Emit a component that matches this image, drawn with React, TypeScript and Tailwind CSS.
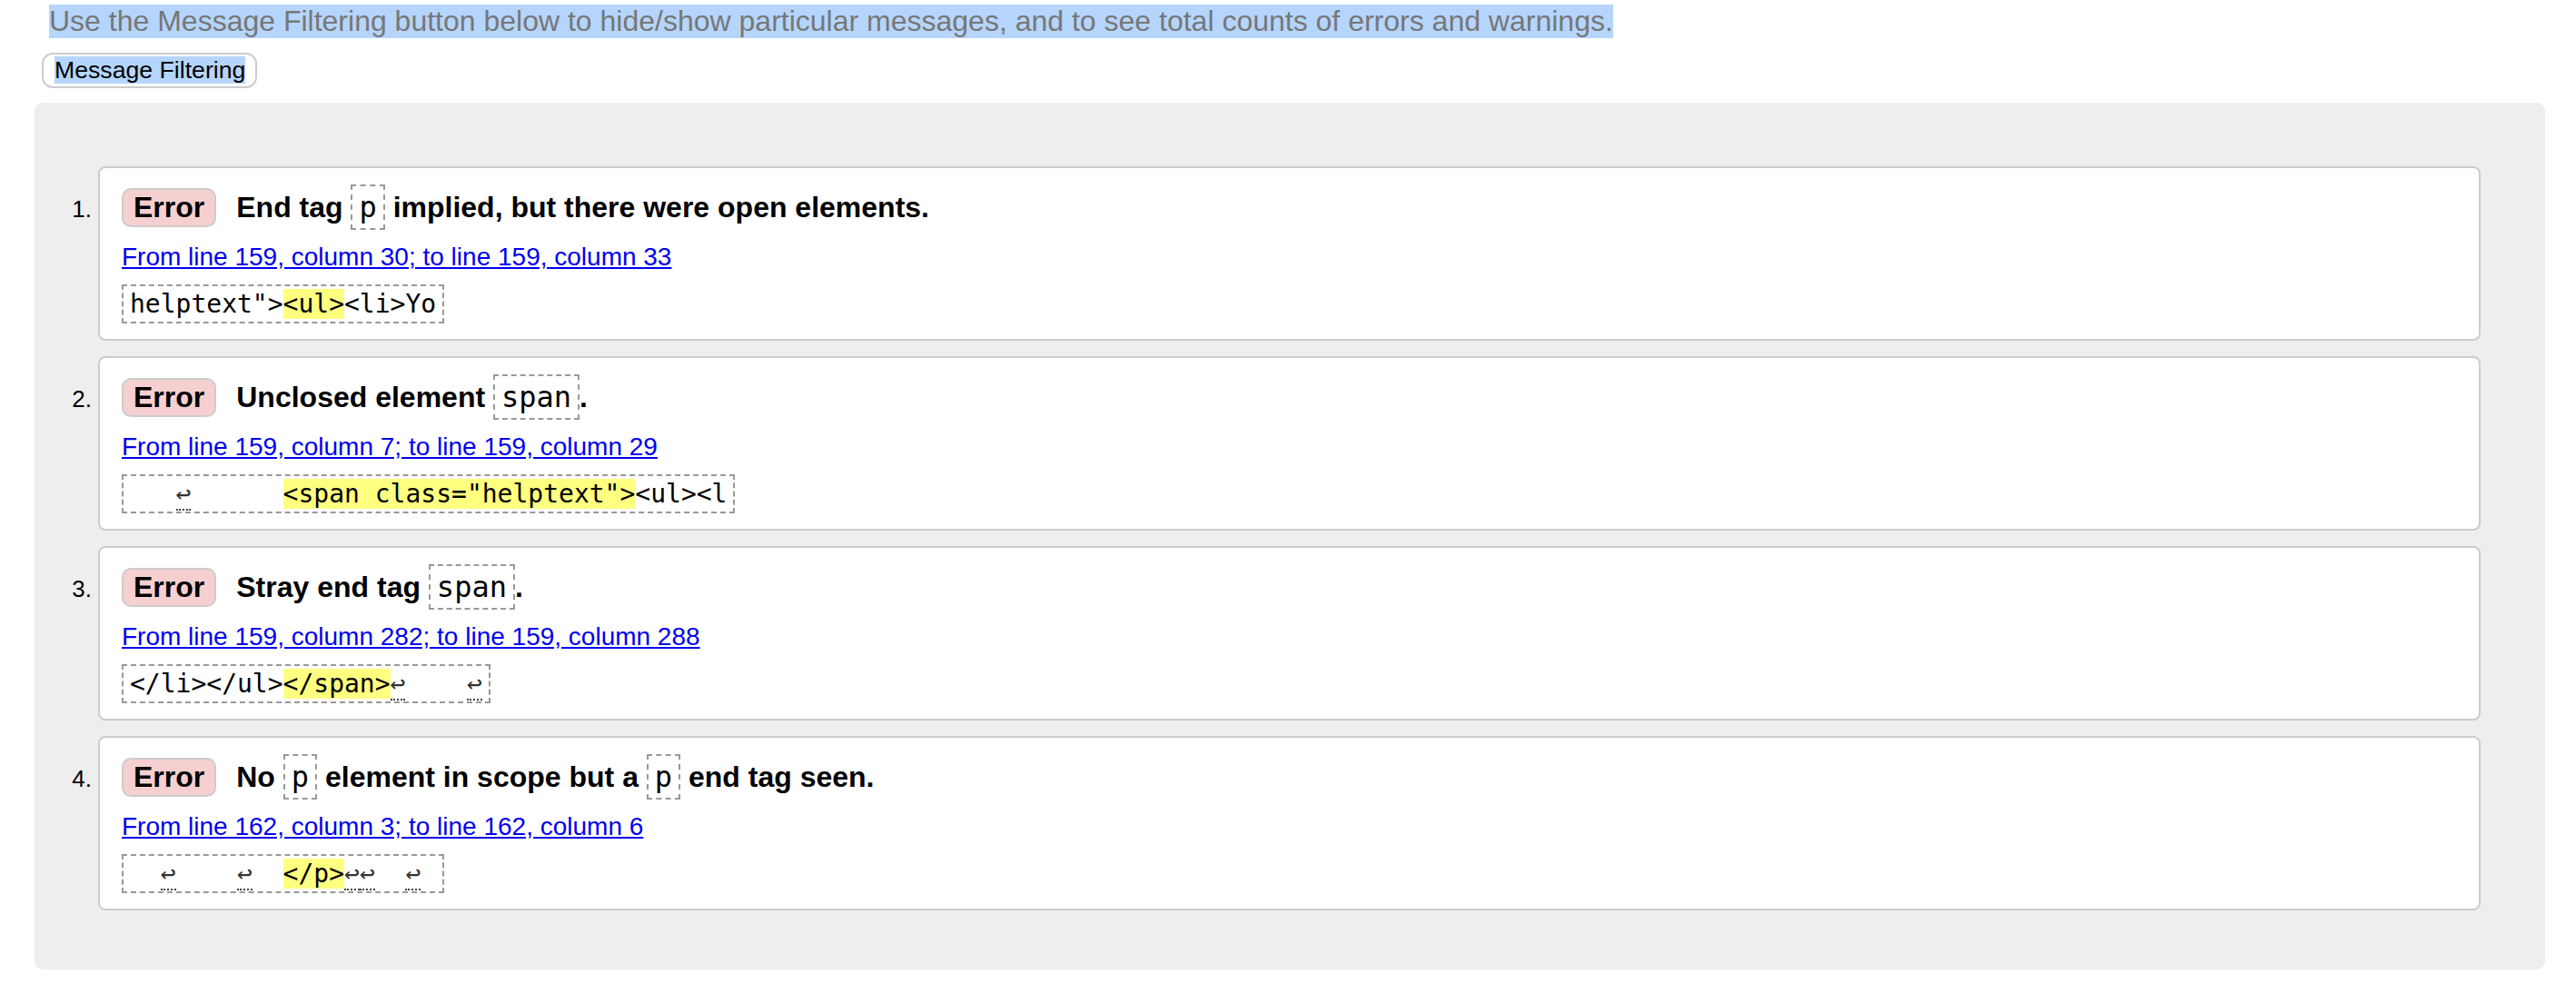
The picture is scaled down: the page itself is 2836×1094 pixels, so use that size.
import React from 'react';

type Part = string | { code: string };

type Message = {
  title: Part[];
  location: string;
  // extract pieces: plain text, highlighted, and line-feed markers
  extract: { text: string; kind?: 'hl' | 'lf' }[];
};

const messages: Message[] = [
  {
    title: ['End tag', { code: 'p' }, 'implied, but there were open elements.'],
    location: 'From line 159, column 30; to line 159, column 33',
    extract: [
      { text: 'helptext">' },
      { text: '<ul>', kind: 'hl' },
      { text: '<li>Yo' },
    ],
  },
  {
    title: ['Unclosed element', { code: 'span' }, '.'],
    location: 'From line 159, column 7; to line 159, column 29',
    extract: [
      { text: '   ' },
      { text: '↩', kind: 'lf' },
      { text: '      ' },
      { text: '<span class="helptext">', kind: 'hl' },
      { text: '<ul><l' },
    ],
  },
  {
    title: ['Stray end tag', { code: 'span' }, '.'],
    location: 'From line 159, column 282; to line 159, column 288',
    extract: [
      { text: '</li></ul>' },
      { text: '</span>', kind: 'hl' },
      { text: '↩', kind: 'lf' },
      { text: '    ' },
      { text: '↩', kind: 'lf' },
    ],
  },
  {
    title: ['No', { code: 'p' }, 'element in scope but a', { code: 'p' }, 'end tag seen.'],
    location: 'From line 162, column 3; to line 162, column 6',
    extract: [
      { text: '  ' },
      { text: '↩', kind: 'lf' },
      { text: '    ' },
      { text: '↩', kind: 'lf' },
      { text: '  ' },
      { text: '</p>', kind: 'hl' },
      { text: '↩', kind: 'lf' },
      { text: '↩', kind: 'lf' },
      { text: '  ' },
      { text: '↩', kind: 'lf' },
      { text: ' ' },
    ],
  },
];

function Title({ parts }: { parts: Part[] }) {
  return (
    <div className="text-[32px] font-bold leading-[normal] text-black">
      <span className="inline-block mr-[22px] rounded-[10px] border-2 border-[#ccc] bg-[#f6d0d0] px-[11px] py-px">
        Error
      </span>
      {parts.map((p, i) => {
        if (typeof p === 'string') {
          const prev = parts[i - 1];
          const lead = i > 0 && typeof prev !== 'string' && !p.startsWith('.') ? ' ' : '';
          return (
            <span key={i}>
              {lead}
              {p}
            </span>
          );
        }
        return (
          <span key={i}>
            {' '}
            <code className="inline-block border-2 border-dashed border-[#999] px-[7px] py-[4px] font-['DejaVu_Sans_Mono',monospace] text-[32px] font-normal leading-[normal]">
              {p.code}
            </code>
          </span>
        );
      })}
    </div>
  );
}

export default function App() {
  return (
    <div className="min-h-screen bg-white font-['Liberation_Sans',Arial,sans-serif] text-black">
      {/* intro */}
      <p className="ml-[54px] pt-[5px] text-[32px] leading-[normal] text-[#777]">
        <span className="inline-block bg-[#b5d5fd]">
          Use the Message Filtering button below to hide/show particular messages, and to see total counts of errors and warnings.
        </span>
      </p>
      <button className="ml-[46px] mt-[16px] block rounded-[12px] border-2 border-[#ccc] bg-white pl-[12px] pr-[11px] py-[2px] text-[26.67px] leading-[normal] text-black">
        <span className="bg-[#b5d5fd]">Message Filtering</span>
      </button>

      {/* results */}
      <div className="ml-[38px] mr-[34px] mt-[16px] rounded-[9px] bg-[#eee] pt-[70px] pb-[65px] pl-[30px] pr-[71px]">
        <ol className="flex flex-col gap-[17px]">
          {messages.map((m, idx) => (
            <li key={idx} className="flex items-baseline">
              <span className="w-[40px] shrink-0 pr-[7px] text-right text-[26px] leading-[normal]">{idx + 1}.</span>
              <div className="flex-1 rounded-[8px] border-2 border-[#ccc] bg-white px-[24px] pt-[18px] pb-[17px]">
                <Title parts={m.title} />
                <p className="mt-[14px] text-[28px] leading-[normal]">
                  <a href="#" className="text-[#0000ee] underline">
                    {m.location}
                  </a>
                </p>
                <div className="mt-[14px] w-fit whitespace-pre border-2 border-dashed border-[#999] px-[7px] py-[3px] font-['DejaVu_Sans_Mono',monospace] text-[28px] leading-[normal]">
                  {m.extract.map((e, j) =>
                    e.kind === 'hl' ? (
                      <span key={j} className="bg-[#ffff80]">
                        {e.text}
                      </span>
                    ) : e.kind === 'lf' ? (
                      <span key={j} className="border-b-2 border-dotted border-[#444] text-[#333]">
                        {e.text}
                      </span>
                    ) : (
                      <span key={j}>{e.text}</span>
                    )
                  )}
                </div>
              </div>
            </li>
          ))}
        </ol>
      </div>
    </div>
  );
}
